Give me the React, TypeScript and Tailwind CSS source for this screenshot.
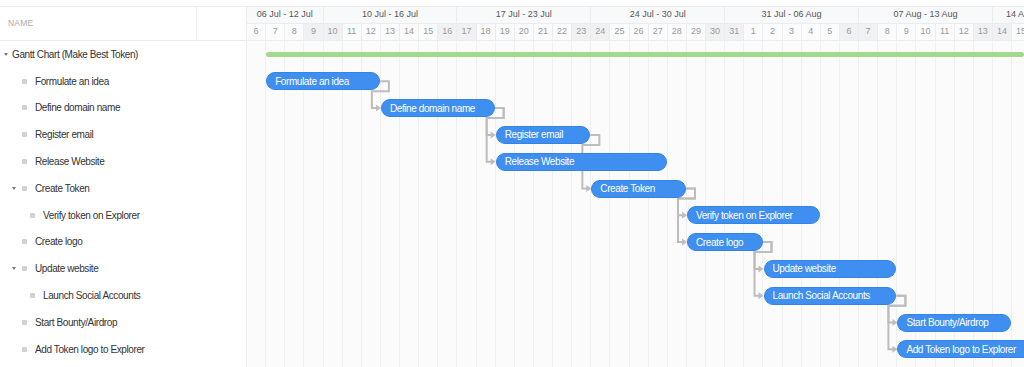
import React from 'react';

const DAY = 19.13;
const ROW = 26.8;

const days = Array.from({ length: 41 }, (_, i) => (i < 26 ? i + 6 : i - 25));

const weeks = [
  { label: '06 Jul - 12 Jul', span: 'col-span-4' },
  { label: '10 Jul - 16 Jul', span: 'col-span-7' },
  { label: '17 Jul - 23 Jul', span: 'col-span-7' },
  { label: '24 Jul - 30 Jul', span: 'col-span-7' },
  { label: '31 Jul - 06 Aug', span: 'col-span-7' },
  { label: '07 Aug - 13 Aug', span: 'col-span-7' },
];

interface Task {
  name: string;
  level: 1 | 2;
  start: number;
  dur: number;
  caret?: boolean;
}

const tasks: Task[] = [
  { name: 'Formulate an idea', level: 1, start: 1, dur: 6 },
  { name: 'Define domain name', level: 1, start: 7, dur: 6 },
  { name: 'Register email', level: 1, start: 13, dur: 5 },
  { name: 'Release Website', level: 1, start: 13, dur: 9 },
  { name: 'Create Token', level: 1, start: 18, dur: 5, caret: true },
  { name: 'Verify token on Explorer', level: 2, start: 23, dur: 7 },
  { name: 'Create logo', level: 1, start: 23, dur: 4 },
  { name: 'Update website', level: 1, start: 27, dur: 7, caret: true },
  { name: 'Launch Social Accounts', level: 2, start: 27, dur: 7 },
  { name: 'Start Bounty/Airdrop', level: 1, start: 34, dur: 6 },
  { name: 'Add Token logo to Explorer', level: 1, start: 34, dur: 8 },
];

const links: [number, number][] = [
  [0, 1], [1, 2], [1, 3], [2, 4], [4, 5], [4, 6], [6, 7], [6, 8], [8, 9], [8, 10],
];

const isWeekend = (i: number) => i % 7 === 3 || i % 7 === 4;

const Caret = () => (
  <span className="w-0 h-0 border-x-[2.5px] border-t-[3px] border-x-transparent border-t-[#777]" />
);

const Bullet = () => <span className="ml-[5px] w-[5px] h-[5px] rounded-[1px] bg-[#d2d2d2]" />;

const Connectors = () => (
  <svg className="absolute inset-0 w-full h-full" width="777" height="324">
    {links.map(([a, b]) => {
      const ta = tasks[a];
      const tb = tasks[b];
      const ra = a + 1;
      const rb = b + 1;
      const xe = (ta.start + ta.dur) * DAY - 1;
      const yc = ra * ROW + 13.5;
      const ybot = ra * ROW + 23.5;
      const xs = tb.start * DAY;
      const yt = rb * ROW + 13.5;
      return (
        <g key={`${a}-${b}`}>
          <path
            d={`M${xe} ${yc} H${xe + 9} V${ybot} H${xs - 9} V${yt} H${xs - 4}`}
            fill="none"
            stroke="#bdbdbd"
            strokeWidth="2"
          />
          <polygon points={`${xs - 5},${yt - 3.5} ${xs},${yt} ${xs - 5},${yt + 3.5}`} fill="#bdbdbd" />
        </g>
      );
    })}
  </svg>
);

export default function App() {
  return (
    <div className="w-[1024px] h-[367px] overflow-hidden bg-white pt-[6px] font-['Liberation_Sans',Arial,sans-serif] text-[#333]">
      <div className="flex border-t border-[#ececec]">
        {/* tree panel */}
        <div className="w-[247px] shrink-0 border-r border-[#ececec]">
          <div className="flex h-[34px] border-b border-[#ececec]">
            <div className="w-[197px] flex items-center pl-[8px] border-r border-[#ececec] text-[8.5px] text-[#aaa] tracking-[0.2px]">
              NAME
            </div>
            <div className="flex-1" />
          </div>
          <div className="text-[10px] tracking-[-0.4px]">
            <div className="flex h-[26.8px] items-center pl-[4px]">
              <Caret />
              <span className="ml-[4px]">Gantt Chart (Make Best Token)</span>
            </div>
            {tasks.map((t) => (
              <div
                key={t.name}
                className={`flex h-[26.8px] items-center ${t.level === 2 ? 'pl-[20px]' : 'pl-[12px]'}`}
              >
                <span className="w-[5px] flex items-center">{t.caret && <Caret />}</span>
                <Bullet />
                <span className="ml-[8px]">{t.name}</span>
              </div>
            ))}
          </div>
        </div>

        {/* timeline */}
        <div className="flex-1 overflow-hidden">
          <div className="grid grid-cols-[repeat(41,19.13px)] h-[17px] border-b border-[#ececec] bg-[#f8f9fa] text-[9px] text-[#555]">
            {weeks.map((w) => (
              <div key={w.label} className={`${w.span} flex items-center justify-center border-r border-[#ececec] whitespace-nowrap`}>
                {w.label}
              </div>
            ))}
            <div className="col-span-2 flex items-center pl-[13px] whitespace-nowrap">14 Aug - 20 Aug</div>
          </div>
          <div className="grid grid-cols-[repeat(41,19.13px)] h-[17px] border-b border-[#ececec] text-[9px] text-[#999]">
            {days.map((d, i) => (
              <div
                key={i}
                className={`flex items-center justify-center border-r border-[#ececec] ${isWeekend(i) ? 'bg-[#f0f1f3]' : 'bg-[#fafbfc]'}`}
              >
                {d}
              </div>
            ))}
          </div>

          <div className="relative h-[326px] bg-[#fbfbfc]">
            <div className="absolute inset-0 grid grid-cols-[repeat(41,19.13px)]">
              {days.map((d, i) => (
                <div key={i} className="border-r border-[#eef0f2]" />
              ))}
            </div>

            <div className="absolute left-[19.13px] right-0 top-[11px] h-[5px] rounded-full bg-[#a2d98f]" />

            <Connectors />

            {tasks.map((t, i) => (
              <div
                key={t.name}
                className="absolute h-[18px] flex items-center pl-[8px] rounded-full bg-[#3f8ff0] border border-[#3483e8] text-white text-[10px] tracking-[-0.4px] whitespace-nowrap overflow-hidden"
                style={{ left: t.start * DAY, width: t.dur * DAY - 1, top: (i + 1) * ROW + 4.5 }}
              >
                {t.name}
              </div>
            ))}
          </div>
        </div>
      </div>
    </div>
  );
}
